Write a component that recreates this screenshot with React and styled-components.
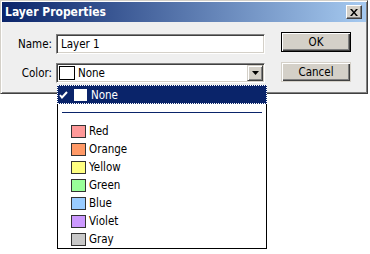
import styled, { createGlobalStyle } from 'styled-components';

const Global = createGlobalStyle`
  html, body { margin: 0; padding: 0; background: #fff; }
  body { font-family: "DejaVu Sans Condensed", "DejaVu Sans", Tahoma, sans-serif; font-size: 11.5px; color: #000; }
`;

const Screen = styled.div`position: relative; width: 370px; height: 254px; overflow: hidden;`;

const Window = styled.div`
  box-sizing: border-box; width: 368px; height: 94px;
  background: #efefef;
  border-top: 1px solid #d4d0c8; border-left: 1px solid #d4d0c8;
  border-right: 1px solid #404040; border-bottom: 1px solid #404040;
  box-shadow: inset 1px 1px #fff, inset -1px -1px #808080;
  padding: 1px;
  display: flex; flex-direction: column;
`;

const TitleBar = styled.div`
  height: 20px; display: flex; align-items: center; justify-content: space-between;
  padding: 0 4px 0 3px;
  background: linear-gradient(to right, #0a246a, #a6caf0);
  color: #fff; font-weight: bold; font-size: 12px;
`;

const CloseBtn = styled.div`
  box-sizing: border-box; width: 16px; height: 14px;
  background: #d4d0c8;
  border-top: 1px solid #fff; border-left: 1px solid #fff;
  border-right: 1px solid #404040; border-bottom: 1px solid #404040;
  box-shadow: inset -1px -1px #808080;
  display: flex; align-items: center; justify-content: center;
`;

const Body = styled.div`display: flex; padding: 10px 0 0 0;`;

const Form = styled.div`display: flex; flex-direction: column; gap: 9px; padding-top: 2px;`;

const Row = styled.div`display: flex; align-items: center;`;

const Label = styled.div`width: 50px; text-align: right; margin-right: 4px;`;

const Field = styled.div`
  box-sizing: border-box; width: 209px; height: 20px;
  background: #fff;
  border-top: 1px solid #808080; border-left: 1px solid #808080;
  border-right: 1px solid #fff; border-bottom: 1px solid #fff;
  box-shadow: inset 1px 1px #404040, inset -1px -1px #d4d0c8;
  display: flex; align-items: center; padding-left: ${p => p.$pad || 4}px;
`;

const Swatch = styled.span`
  box-sizing: border-box; display: inline-block;
  width: ${p => p.$w || 15}px; height: ${p => p.$h || 13}px;
  background: ${p => p.$c};
  border: 1px solid ${p => p.$b || '#000'};
  margin-right: 3px; flex: none;
`;

const DropBtn = styled.div`
  box-sizing: border-box; width: 16px; height: 16px; margin-left: auto; margin-right: 1px;
  background: #d4d0c8;
  border-top: 1px solid #d4d0c8; border-left: 1px solid #d4d0c8;
  border-right: 1px solid #404040; border-bottom: 1px solid #404040;
  box-shadow: inset 1px 1px #fff, inset -1px -1px #808080;
  display: flex; align-items: center; justify-content: center;
`;

const Buttons = styled.div`display: flex; flex-direction: column; gap: 10px; margin-left: 16px;`;

const Button = styled.div`
  box-sizing: border-box; width: 70px; height: 20px;
  background: #d4d0c8;
  border: 1px solid ${p => (p.$default ? '#000' : '#d4d0c8')};
  box-shadow: inset 1px 1px #fff, inset -1px -1px #404040, inset -2px -2px #808080;
  display: flex; align-items: center; justify-content: center;
`;

const List = styled.div`
  position: absolute; left: 57px; top: 85px;
  box-sizing: border-box; width: 210px; height: 164px;
  background: #fff; border: 1px solid #000;
`;

const Selected = styled.div`
  box-sizing: border-box; height: 19px; margin: -1px -1px 0;
  background: #0a246a; color: #fff;
  outline: 1px dotted #fff; outline-offset: -1px;
  border: 1px dotted #000;
  display: flex; align-items: center; padding-left: 1px;
`;

const Check = styled.svg`width: 9px; height: 8px; margin-right: 5px; flex: none;`;

const Separator = styled.div`height: 1px; background: #0a246a; margin: 8px 4px 9px 4px;`;

const Item = styled.div`height: 18px; display: flex; align-items: center; padding-left: 13px;`;

const colors = [
  ['Red', '#ff9999'],
  ['Orange', '#ff9966'],
  ['Yellow', '#ffff80'],
  ['Green', '#99ff99'],
  ['Blue', '#99ccff'],
  ['Violet', '#cc99ff'],
  ['Gray', '#c8c8c8'],
];

export default function App() {
  return (
    <Screen>
      <Global />
      <Window>
        <TitleBar>
          <span>Layer Properties</span>
          <CloseBtn>
            <svg width="8" height="7" viewBox="0 0 8 7">
              <path d="M0 0h2l2 2.5L6 0h2L5 3.5 8 7H6L4 4.5 2 7H0l3-3.5z" fill="#000" />
            </svg>
          </CloseBtn>
        </TitleBar>
        <Body>
          <Form>
            <Row>
              <Label>Name:</Label>
              <Field>Layer 1</Field>
            </Row>
            <Row>
              <Label>Color:</Label>
              <Field $pad={2}>
                <Swatch $c="#fff" $w={16} $h={14} />
                None
                <DropBtn>
                  <svg width="7" height="4" viewBox="0 0 7 4"><path d="M0 0h7L3.5 4z" fill="#000" /></svg>
                </DropBtn>
              </Field>
            </Row>
          </Form>
          <Buttons>
            <Button $default>OK</Button>
            <Button>Cancel</Button>
          </Buttons>
        </Body>
      </Window>
      <List>
        <Selected>
          <Check viewBox="0 0 9 8">
            <path d="M1 4l2 2.5L8 1" stroke="#fff" strokeWidth="2" fill="none" />
          </Check>
          <Swatch $c="#fff" $b="#0a246a" $w={15} $h={14} />
          None
        </Selected>
        <Separator />
        {colors.map(([name, c]) => (
          <Item key={name}>
            <Swatch $c={c} $b="#333" />
            {name}
          </Item>
        ))}
      </List>
    </Screen>
  );
}
